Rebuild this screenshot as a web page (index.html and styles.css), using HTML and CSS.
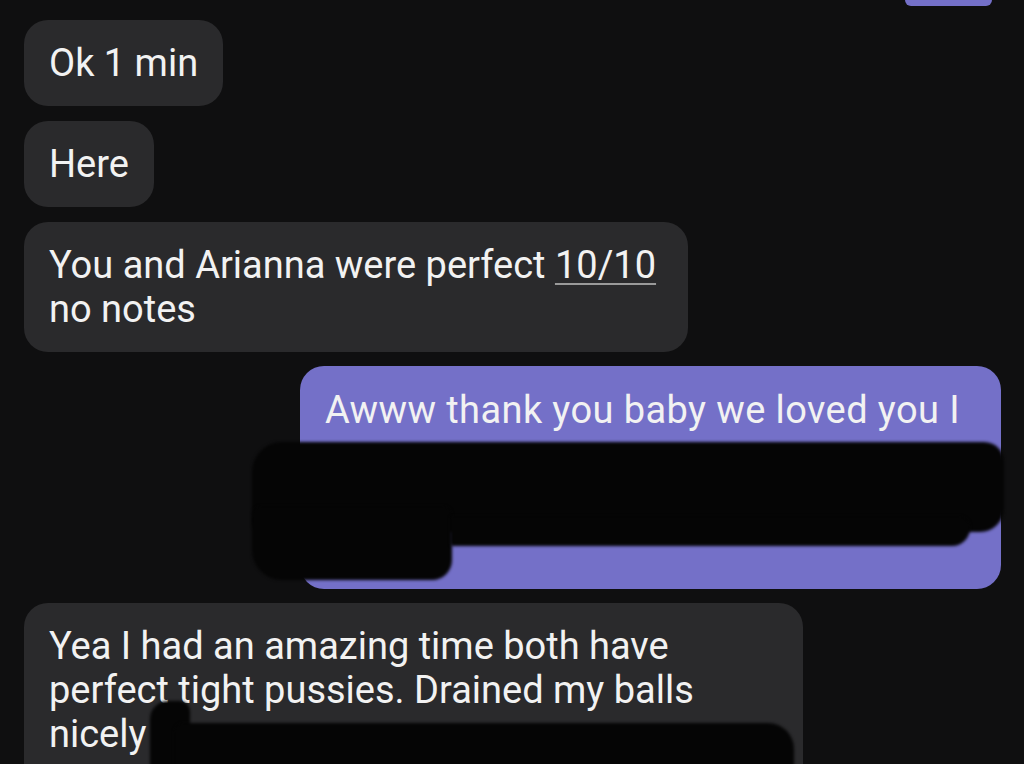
FILE: index.html
```html
<!DOCTYPE html>
<html>
<head>
<meta charset="utf-8">
<link rel="stylesheet" href="styles.css">
</head>
<body>
<div class="chat">
  <div class="sliver"></div>
  <div class="bubble in">Ok 1 min</div>
  <div class="bubble in">Here</div>
  <div class="bubble in wide">You and Arianna were perfect <span class="link">10/10</span><br>no notes</div>
  <div class="bubble out">
    <div class="line">Awww thank you baby we loved you I</div>
    <div class="line">&nbsp;</div>
    <div class="line">&nbsp;</div>
    <div class="line">&nbsp;</div>
    <div class="redact r1"></div>
    <div class="redact r2"></div>
    <div class="redact r3"></div>
  </div>
  <div class="bubble in last">
    Yea I had an amazing time both have<br>perfect tight pussies. Drained my balls<br>nicely
    <div class="redact r4"></div>
    <div class="redact r5"></div>
  </div>
</div>
</body>
</html>
```

FILE: styles.css
```css
html, body {
  margin: 0;
  padding: 0;
  background: #0f0f10;
  width: 1024px;
  height: 764px;
  overflow: hidden;
}
.chat {
  display: flex;
  flex-direction: column;
  align-items: flex-start;
  gap: 14px;
  padding: 0 23px 0 24px;
  font-family: Roboto, "Liberation Sans", sans-serif;
  font-size: 38px;
  line-height: 44px;
  color: #f2f2f2;
  letter-spacing: 0;
}
.sliver {
  align-self: flex-end;
  width: 87px;
  height: 6px;
  margin-right: 9px;
  background: #7470c8;
  border-radius: 0 0 18px 18px;
}
.bubble {
  position: relative;
  padding: 21px 25px;
  border-radius: 24px;
}
.in {
  background: #2a2a2c;
}
.in + .in { margin-top: 1px; }
.wide { padding-right: 32px; }
.link {
  text-decoration: underline;
  text-decoration-color: #9a9a9a;
  text-decoration-thickness: 2px;
  text-underline-offset: 5px;
}
.out {
  align-self: flex-end;
  width: 651px;
  background: #7470c8;
  padding: 22px 25px 25px 25px;
  letter-spacing: 0.4px;
}
.last {
  width: 729px;
  height: 200px;
  padding-top: 21px;
}
.redact {
  position: absolute;
  background: #050505;
  filter: blur(1.5px);
}
.r1 { left: -48px; top: 76px; width: 752px; height: 90px; border-radius: 30px 20px 24px 10px; }
.r2 { left: -48px; top: 140px; width: 200px; height: 74px; border-radius: 10px 10px 20px 30px; }
.r3 { left: 150px; top: 150px; width: 520px; height: 30px; border-radius: 6px 20px 30px 6px; }
.r4 { left: 126px; top: 98px; width: 40px; height: 80px; border-radius: 18px 10px 0 0; }
.r5 { left: 150px; top: 120px; width: 620px; height: 80px; border-radius: 10px 26px 0 0; }
```
